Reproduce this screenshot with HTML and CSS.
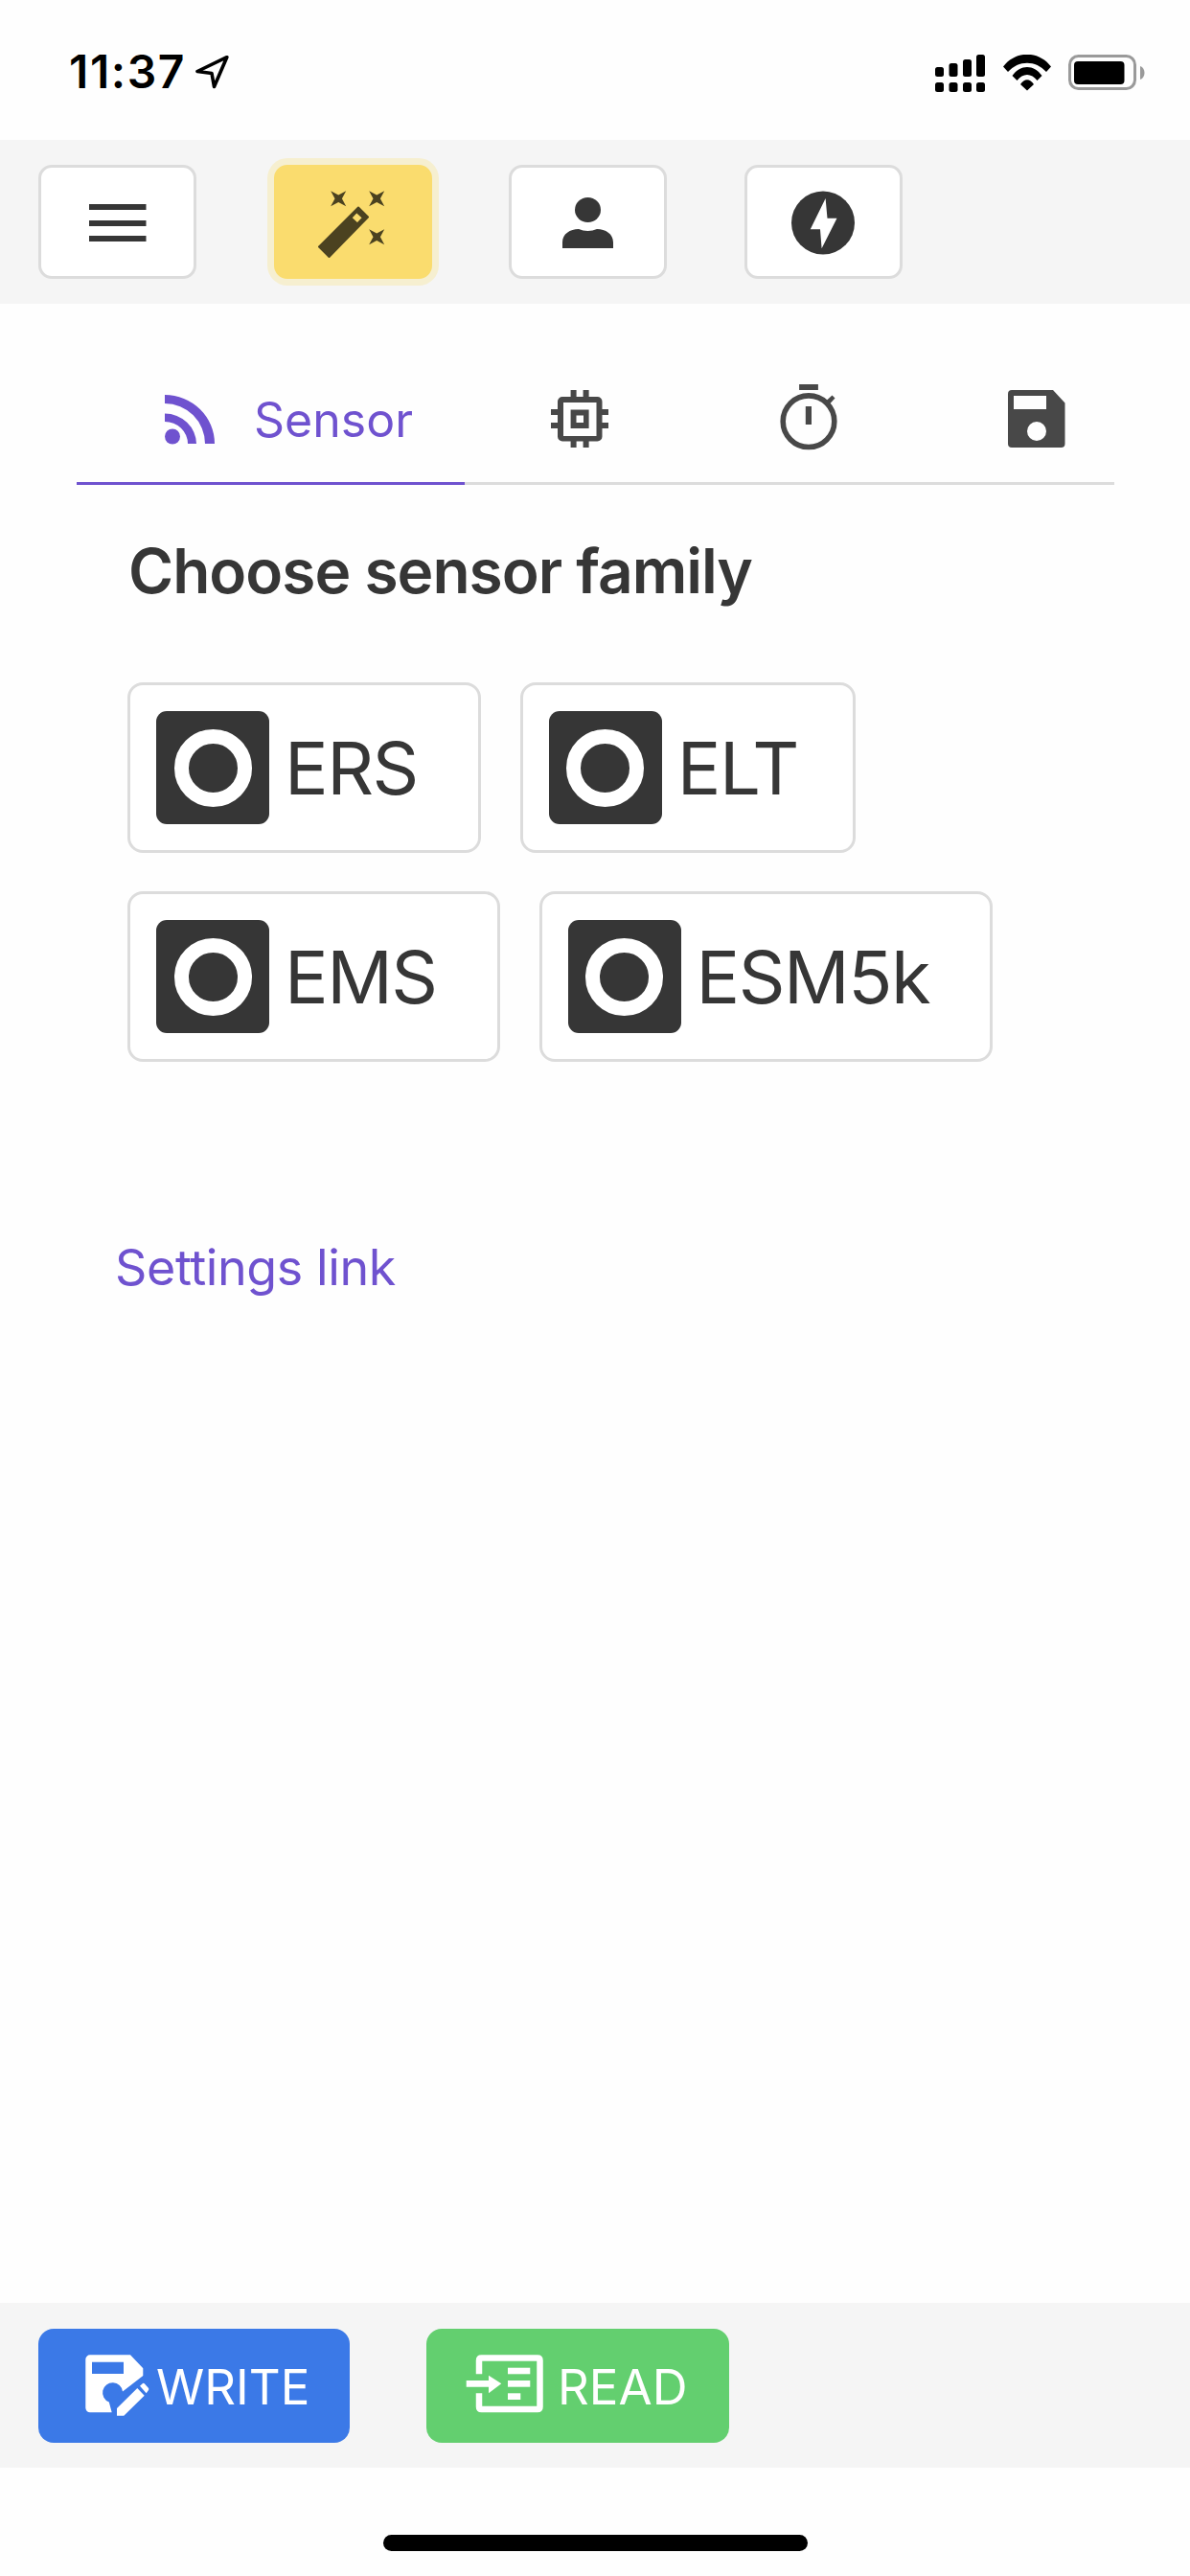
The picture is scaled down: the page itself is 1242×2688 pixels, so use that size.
FILE: index.html
```html
<!DOCTYPE html>
<html lang="en">
<head>
<meta charset="utf-8">
<title>Choose sensor family</title>
<link rel="stylesheet" href="styles.css">
</head>
<body>
<div class="app">
  <header class="status">
    <div class="status-left">
      <span class="time">11:37</span>
      <svg class="ic-arrow" viewBox="203 58 36 36"><path d="M236.8 60.7 L206 75.5 L221 77.5 L223.5 91.5 Z" fill="none" stroke="#000" stroke-width="3.6" stroke-linejoin="round"/></svg>
    </div>
    <div class="status-right">
      <svg class="ic-signal" viewBox="976 57 52 39"><g fill="#000"><rect x="976" y="70" width="9" height="10" rx="2.5"/><rect x="990.5" y="66" width="9" height="14" rx="2.5"/><rect x="1005" y="62" width="9" height="18" rx="2.5"/><rect x="1019" y="57" width="9" height="23" rx="2.5"/><rect x="976" y="86" width="9" height="10" rx="2.5"/><rect x="990.5" y="86" width="9" height="10" rx="2.5"/><rect x="1005" y="86" width="9" height="10" rx="2.5"/><rect x="1019" y="86" width="9" height="10" rx="2.5"/></g></svg>
      <svg class="ic-wifi" viewBox="1047 57 50 38"><g fill="#000"><path d="M1047 69.5 C1060 52.5 1084 52.5 1097 69.5 L1092 75 C1081 62.5 1063 62.5 1052 75Z"/><path d="M1056.5 79 C1065 67 1079 67 1087.5 79 L1082.5 84 C1076.5 76 1067.5 76 1061.5 84Z"/><path d="M1065 88 C1069 81.5 1075 81.5 1079 88 L1072 94.5Z"/></g></svg>
      <svg class="ic-battery" viewBox="1115 57 80 37"><rect x="1116.5" y="58.5" width="68" height="34" rx="9" fill="none" stroke="#9a9a9a" stroke-width="3"/><rect x="1121" y="64" width="52.5" height="24" rx="4" fill="#000"/><path d="M1190 69 C1193 70 1194.5 73 1194.5 76 C1194.5 79 1193 82 1190 83Z" fill="#9a9a9a"/></svg>
    </div>
  </header>

  <nav class="toolbar">
    <button class="tool">
      <svg class="tool-ic" viewBox="83 191 80 80"><g fill="#363636"><rect x="93" y="212" width="59.5" height="6"/><rect x="93" y="229" width="59.5" height="6"/><rect x="93" y="245" width="59.5" height="6"/></g></svg>
    </button>
    <button class="tool tool-active">
      <svg class="tool-ic" viewBox="327.5 191.5 80 80"><g fill="#4b4220"><path fill-rule="evenodd" stroke="#4b4220" stroke-width="2" stroke-linejoin="round" d="M373.5 216 L383.5 226 L343 267.5 L332.5 257 Z M371.7 220.5 L365.8 226.8 L372.5 233 L378.5 226.8 Z"/><path d="M344.7 198.7 L352.7 203 L360.7 198.7 L356.4 206.7 L360.7 214.7 L352.7 210.4 L344.7 214.7 L349 206.7Z"/><path d="M384.7 198.7 L392.7 203 L400.7 198.7 L396.4 206.7 L400.7 214.7 L392.7 210.4 L384.7 214.7 L389 206.7Z"/><path d="M384.7 238.7 L392.7 243 L400.7 238.7 L396.4 246.7 L400.7 254.7 L392.7 250.4 L384.7 254.7 L389 246.7Z"/></g></svg>
    </button>
    <button class="tool">
      <svg class="tool-ic" viewBox="573 191 80 80"><g fill="#363636"><ellipse cx="612.5" cy="218" rx="13.5" ry="13"/><path d="M586 258 V252 C586 243 594 238 603 238 C606 239 609 240 612.5 240 C616 240 619 239 622 238 C631 238 639 243 639 252 V258 Z"/></g></svg>
    </button>
    <button class="tool">
      <svg class="tool-ic" viewBox="818 191 80 80"><circle cx="858" cy="231.5" r="33" fill="#363636"/><path d="M860.6 206 L844.8 238.3 L855 238.3 L856.6 258.3 L872.5 226.7 L862.5 226.7 Z" fill="#fff"/></svg>
    </button>
  </nav>

  <main class="content">
    <div class="tabs">
      <div class="tab tab-active">
        <svg class="tab-rss" viewBox="172 401 52 72"><g fill="#6f52cf"><circle cx="180" cy="455.5" r="8"/><path d="M172 412 A52 51 0 0 1 224 463 H214 A42 42 0 0 0 172 421 Z"/><path d="M172 431.5 A33 32 0 0 1 205 463 H196 A24 23 0 0 0 172 440 Z"/></g></svg>
        <span class="tab-label">Sensor</span>
      </div>
      <div class="tab tab-chip">
        <svg class="tab-ic" viewBox="575 401 60 72"><g fill="#484848"><path fill-rule="evenodd" d="M587 414 H623.5 A5 5 0 0 1 628.5 419 V455.5 A5 5 0 0 1 623.5 460.5 H587 A5 5 0 0 1 582 455.5 V419 A5 5 0 0 1 587 414 Z M588 420 V455 H622.5 V420 Z"/><path fill-rule="evenodd" d="M595.6 427.5 H614.6 V447 H595.6 Z M601.5 433.5 V441 H609 V433.5 Z"/><rect x="595.6" y="407" width="6" height="8"/><rect x="608.6" y="407" width="6" height="8"/><rect x="595.6" y="459" width="6" height="8"/><rect x="608.6" y="459" width="6" height="8"/><rect x="575" y="427" width="8" height="6"/><rect x="575" y="441" width="8" height="6"/><rect x="628" y="427" width="7" height="6"/><rect x="628" y="441" width="7" height="6"/></g></svg>
      </div>
      <div class="tab tab-watch">
        <svg class="tab-ic" viewBox="813.5 401 60 72"><g fill="#484848"><circle cx="843.5" cy="439.7" r="26.8" fill="none" stroke="#484848" stroke-width="5.6"/><rect x="833.6" y="401" width="19.8" height="6"/><rect x="840.3" y="424" width="6.2" height="19"/><path d="M862 418 L868 412.5 L871 415.5 L865.5 421.5Z"/></g></svg>
      </div>
      <div class="tab tab-save">
        <svg class="tab-ic" viewBox="1052 401 60 72"><path fill="#484848" fill-rule="evenodd" d="M1056 407 H1099 L1111.5 420.5 V463 A4 4 0 0 1 1107.5 467 H1056 A4 4 0 0 1 1052 463 V411 A4 4 0 0 1 1056 407 Z M1058 413 V427 H1092 V413 Z M1082 440 A10 10 0 1 0 1082 460 A10 10 0 1 0 1082 440 Z"/></svg>
      </div>
    </div>

    <h1 class="title">Choose sensor family</h1>

    <div class="options">
      <label class="option"><span class="radio"><span class="radio-dot"></span></span><span class="option-text">ERS</span></label>
      <label class="option option-narrow"><span class="radio"><span class="radio-dot"></span></span><span class="option-text">ELT</span></label>
      <label class="option"><span class="radio"><span class="radio-dot"></span></span><span class="option-text">EMS</span></label>
      <label class="option"><span class="radio"><span class="radio-dot"></span></span><span class="option-text">ESM5k</span></label>
    </div>

    <a class="settings">Settings link</a>
  </main>

  <footer class="actions">
    <button class="action action-write">
      <svg class="action-ic" viewBox="86 2456 70 70"><path fill="#fff" fill-rule="evenodd" d="M94 2459.3 H136 L149.3 2473.3 V2481 L128 2497.5 A10.5 10.5 0 1 0 113.8 2508.5 L116.7 2519.3 H94 A4.7 4.7 0 0 1 89.3 2514.6 V2464 A4.7 4.7 0 0 1 94 2459.3 Z M96 2466.7 V2479 H129 V2466.7 Z"/><path fill="#fff" d="M122 2515 L143.3 2494 L150.7 2501.7 L129.3 2522.7 H122 Z M146 2491.7 L149 2489 Q150.2 2488.6 151 2489.4 L155 2494 Q155.6 2495.2 155 2496 L152.7 2499.3 Z"/></svg>
      <span class="action-label">WRITE</span>
    </button>
    <button class="action action-read">
      <svg class="action-ic" viewBox="486 2456 84 70"><g fill="#fff"><path d="M500 2479.3 V2465 Q500 2462.5 502.5 2462.5 H561 Q563.5 2462.5 563.5 2465 V2513.5 Q563.5 2516 561 2516 H502.5 Q500 2516 500 2513.5 V2499.3" fill="none" stroke="#fff" stroke-width="6.5"/><path d="M486.7 2486 H510 V2480.7 L523.3 2489.3 L510 2499.3 V2492.7 H486.7 Z"/><rect x="530" y="2472.7" width="23.3" height="6.6"/><rect x="530" y="2486" width="23.3" height="6.7"/><rect x="530" y="2499.3" width="13.3" height="6.7"/></g></svg>
      <span class="action-label">READ</span>
    </button>
  </footer>

  <div class="home"><span class="home-bar"></span></div>
</div>
</body>
</html>
```
FILE: styles.css
```css
* { box-sizing: border-box; }
html, body { margin: 0; padding: 0; background: #fefefe; }
body { font-family: Inter, Roboto, "Liberation Sans", sans-serif; color: #363636; }
svg { display: block; flex: none; }
button { font: inherit; margin: 0; padding: 0; cursor: pointer; }

.app { width: 1242px; height: 2688px; display: flex; flex-direction: column; background: #fefefe; overflow: hidden; }

.status { height: 146px; flex: none; display: flex; justify-content: space-between; align-items: flex-start; padding: 48px 47px 0 72px; }
.status-left { display: flex; align-items: center; gap: 9px; }
.time { font-size: 48px; font-weight: 600; line-height: 54px; letter-spacing: 1.6px; color: #000; }
.ic-arrow { width: 36px; height: 36px; }
.status-right { display: flex; align-items: flex-start; padding-top: 9px; }
.ic-signal { width: 52px; height: 39px; margin-right: 19px; }
.ic-wifi { width: 50px; height: 38px; margin-right: 18px; }
.ic-battery { width: 80px; height: 37px; }

.toolbar { height: 171px; flex: none; background: #f5f5f5; display: flex; align-items: center; gap: 80.5px; padding: 0 40px; }
.tool { width: 165px; height: 119px; background: #fff; border: 3px solid #dcdcdc; border-radius: 14px; display: flex; align-items: center; justify-content: center; }
.tool-ic { width: 80px; height: 80px; }
.tool-active { background: #fadc6e; border-color: #fadc6e; box-shadow: 0 0 0 7px #f6efd0; }

.content { flex: 1; display: flex; flex-direction: column; min-height: 0; }

.tabs { margin: 0 79px 0 80px; height: 189px; flex: none; display: flex; border-bottom: 3px solid #dcdcdc; }
.tab { display: flex; align-items: center; padding-top: 54px; flex: none; }
.tab-active { width: 405px; padding-left: 92px; gap: 41px; border-bottom: 3px solid #6f52cf; margin-bottom: -3px; height: 189px; }
.tab-rss { width: 52px; height: 72px; }
.tab-ic { width: 60px; height: 72px; }
.tab-label { font-size: 50px; line-height: 60px; padding-top: 2px; color: #6f52cf; }
.tab-chip { width: 240px; justify-content: center; }
.tab-watch { width: 237px; justify-content: center; }
.tab-save { width: 201px; padding-left: 90px; }

.title { margin: 50px 0 0 134px; font-size: 64px; font-weight: 600; line-height: 80px; letter-spacing: -1px; color: #363636; }

.options { margin: 76px 79px 0 133px; display: flex; flex-wrap: wrap; gap: 40px 41px; }
.option { display: flex; align-items: center; gap: 16px; height: 178px; padding: 0 63px 0 27px; background: #fff; border: 3px solid #dcdcdc; border-radius: 16px; }
.option-narrow { padding-right: 57px; }
.radio { width: 118px; height: 118px; flex: none; background: #363636; border-radius: 11px; display: flex; align-items: center; justify-content: center; }
.radio-dot { width: 81px; height: 81px; border: 15px solid #fff; border-radius: 50%; }
.option-text { font-size: 76px; line-height: 90px; letter-spacing: -1.5px; color: #363636; }

.settings { margin: 183px 0 0 120px; font-size: 52px; line-height: 64px; letter-spacing: -0.4px; color: #6f52cf; align-self: flex-start; }

.actions { height: 172px; flex: none; background: #f5f5f5; display: flex; align-items: center; gap: 80px; padding: 0 40px; }
.action { height: 119px; border: 0; border-radius: 16px; display: flex; align-items: center; color: #fff; }
.action-write { width: 325px; background: #3b79e7; padding-left: 46px; gap: 7px; }
.action-read { width: 316px; background: #63cf6f; padding-left: 41px; gap: 12px; }
.action-write .action-ic { width: 70px; height: 70px; }
.action-read .action-ic { width: 84px; height: 70px; }
.action-label { font-size: 51px; line-height: 60px; padding-top: 4px; }

.home { height: 113px; flex: none; padding: 70px 0 0 400px; }
.home-bar { display: block; width: 443px; height: 17px; border-radius: 9px; background: #000; }
```
